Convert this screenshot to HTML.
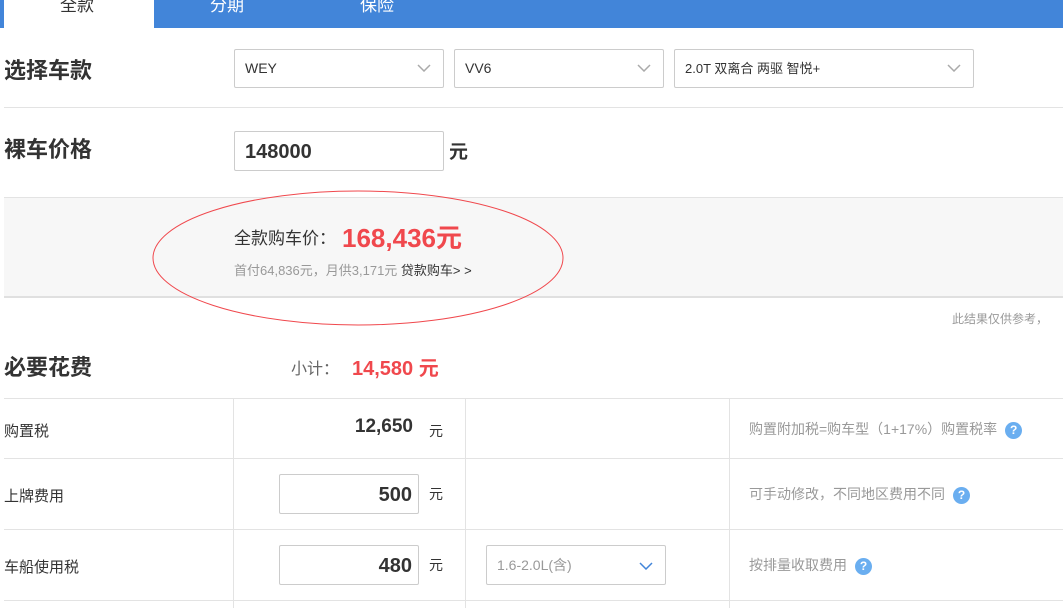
<!DOCTYPE html>
<html><head><meta charset="utf-8"><style>
*{margin:0;padding:0;box-sizing:border-box}
body{width:1063px;height:608px;overflow:hidden;background:#fff;font-family:"Liberation Sans","Noto Sans CJK SC",sans-serif;color:#333;position:relative}
.a{position:absolute;white-space:nowrap}
.tab{position:absolute;top:0;height:28px;background:#4285d9;left:0;width:1063px}
.sel{position:absolute;border:1px solid #ccc;border-radius:2px;background:#fff;font-size:14px;color:#333;padding-left:10px;line-height:37px}
.sel svg{position:absolute;right:12px;top:14px}
.h{font-size:22px;font-weight:bold;color:#333}
.hl{position:absolute;height:1px;background:#e3e3e3}
.vl{position:absolute;width:1px;background:#e3e3e3}
.inp{position:absolute;border:1px solid #ccc;border-radius:2px;background:#fff;font-weight:bold;color:#333}
.note{font-size:14px;color:#999}
.q{display:inline-block;width:17px;height:17px;border-radius:50%;background:#6aaef0;color:#fff;font-size:12px;font-weight:bold;text-align:center;line-height:17px;vertical-align:middle;margin-left:8px}
</style></head><body>
<div class="tab"></div>
<div class="a" style="left:4px;top:0;width:150px;height:28px;background:#fff"></div>
<div class="a" style="left:60px;top:-9px;font-size:17px;color:#333">全款</div>
<div class="a" style="left:210px;top:-9px;font-size:17px;color:#fff">分期</div>
<div class="a" style="left:360px;top:-9px;font-size:17px;color:#fff">保险</div>

<div class="a h" style="left:4px;top:53px">选择车款</div>
<div class="sel" style="left:234px;top:49px;width:210px;height:39px">WEY<svg width="14" height="8"><path d="M1 1l6 6 6-6" stroke="#aaa" stroke-width="1.5" fill="none"/></svg></div>
<div class="sel" style="left:454px;top:49px;width:210px;height:39px">VV6<svg width="14" height="8"><path d="M1 1l6 6 6-6" stroke="#aaa" stroke-width="1.5" fill="none"/></svg></div>
<div class="sel" style="left:674px;top:49px;width:300px;height:39px;font-size:13px">2.0T 双离合 两驱 智悦+<svg width="14" height="8"><path d="M1 1l6 6 6-6" stroke="#aaa" stroke-width="1.5" fill="none"/></svg></div>
<div class="hl" style="left:4px;top:107px;width:1059px"></div>

<div class="a h" style="left:4px;top:132px">裸车价格</div>
<div class="inp" style="left:234px;top:131px;width:210px;height:40px;font-size:20px;padding-left:10px;line-height:40px">148000</div>
<div class="a" style="left:449px;top:137px;font-size:19px;font-weight:bold">元</div>

<div class="a" style="left:4px;top:197px;width:1059px;height:101px;background:#f7f7f7;border-top:1px solid #e3e3e3;border-bottom:2px solid #e0e0e0"></div>
<div class="a" style="left:234px;top:224px;font-size:17px;color:#333">全款购车价：</div>
<div class="a" style="left:342px;top:218px;font-size:26px;font-weight:bold;color:#f0484d">168,436元</div>
<div class="a" style="left:234px;top:260px;font-size:13px;color:#999">首付64,836元，月供3,171元 <span style="color:#333">贷款购车&gt; &gt;</span></div>
<svg class="a" style="left:0;top:0" width="1063" height="608"><ellipse cx="358" cy="258" rx="205" ry="67" fill="none" stroke="#f0484d" stroke-width="1"/></svg>
<div class="a" style="left:952px;top:310px;font-size:12px;color:#999">此结果仅供参考，</div>

<div class="a h" style="left:4px;top:350px">必要花费</div>
<div class="a" style="left:291px;top:355px;font-size:16px;color:#666">小计：</div>
<div class="a" style="left:352px;top:352px;font-size:20px;font-weight:bold;color:#f0484d">14,580 元</div>

<div class="hl" style="left:4px;top:398px;width:1059px"></div>
<div class="hl" style="left:4px;top:458px;width:1059px"></div>
<div class="hl" style="left:4px;top:529px;width:1059px"></div>
<div class="hl" style="left:4px;top:600px;width:1059px"></div>
<div class="vl" style="left:233px;top:398px;height:210px"></div>
<div class="vl" style="left:465px;top:398px;height:210px"></div>
<div class="vl" style="left:729px;top:398px;height:210px"></div>

<div class="a" style="left:4px;top:420px;font-size:15px">购置税</div>
<div class="a" style="left:300px;top:416px;width:113px;text-align:right;font-size:19px;font-weight:bold">12,650</div>
<div class="a" style="left:429px;top:421px;font-size:14px">元</div>
<div class="a note" style="left:749px;top:419px">购置附加税=购车型（1+17%）购置税率<span class="q">?</span></div>

<div class="a" style="left:4px;top:485px;font-size:15px">上牌费用</div>
<div class="inp" style="left:279px;top:474px;width:140px;height:40px;font-size:20px;text-align:right;padding-right:6px;line-height:40px">500</div>
<div class="a" style="left:429px;top:484px;font-size:14px">元</div>
<div class="a note" style="left:749px;top:484px">可手动修改，不同地区费用不同<span class="q">?</span></div>

<div class="a" style="left:4px;top:556px;font-size:15px">车船使用税</div>
<div class="inp" style="left:279px;top:545px;width:140px;height:40px;font-size:20px;text-align:right;padding-right:6px;line-height:40px">480</div>
<div class="a" style="left:429px;top:555px;font-size:14px">元</div>
<div class="sel" style="left:486px;top:545px;width:180px;height:40px;font-size:14px;color:#999;line-height:38px">1.6-2.0L(含)<svg width="14" height="8" style="top:16px"><path d="M1 1l6 6 6-6" stroke="#4285d9" stroke-width="1.5" fill="none"/></svg></div>
<div class="a note" style="left:749px;top:555px">按排量收取费用<span class="q">?</span></div>
</body></html>
